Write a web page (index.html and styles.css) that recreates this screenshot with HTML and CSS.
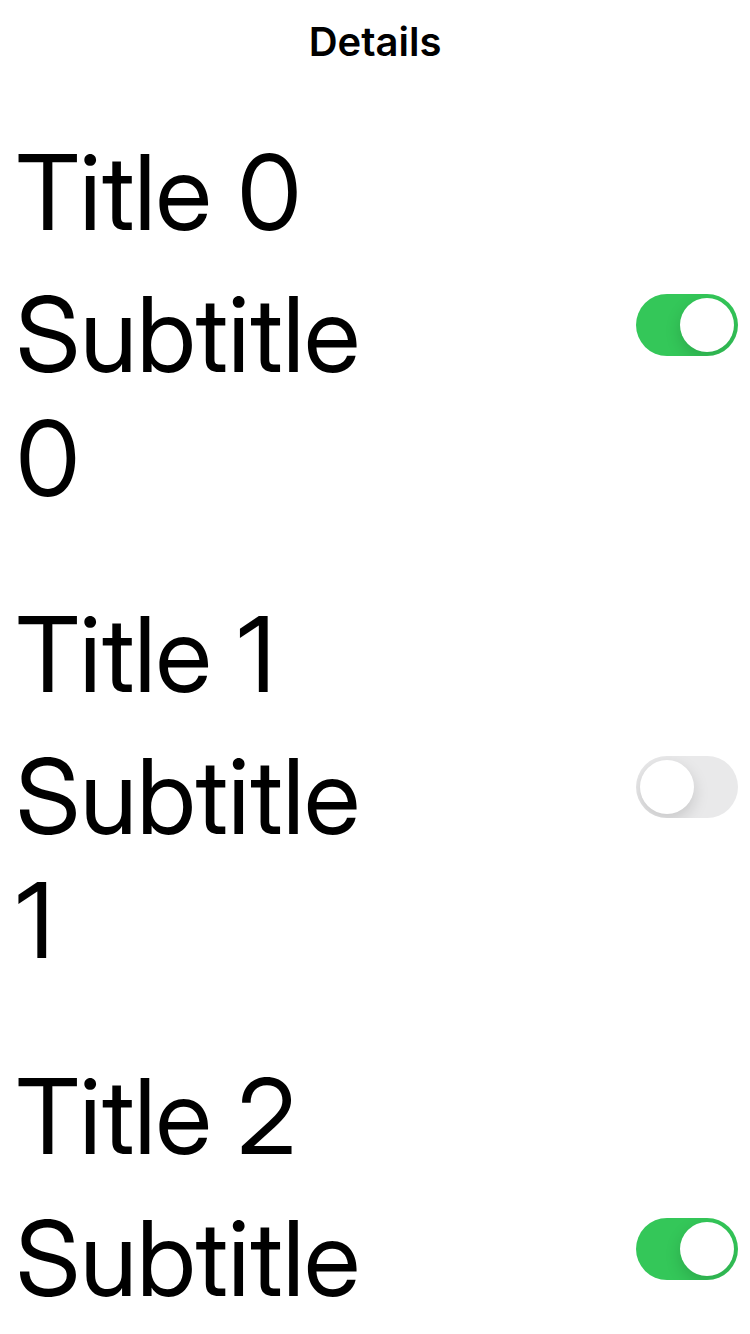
FILE: index.html
```html
<!DOCTYPE html>
<html lang="en">
<head>
<meta charset="utf-8">
<meta name="viewport" content="width=device-width, initial-scale=1">
<title>Details</title>
<link rel="stylesheet" href="styles.css">
</head>
<body>
<header class="navbar"><h1 class="navbar-title">Details</h1></header>
<main class="list">
  <section class="row">
    <label class="text" for="switch-0"><span class="title">Title 0</span><span class="subtitle">Subtitle 0</span></label>
    <input class="switch" id="switch-0" type="checkbox" role="switch" checked>
  </section>
  <section class="row">
    <label class="text" for="switch-1"><span class="title">Title 1</span><span class="subtitle">Subtitle 1</span></label>
    <input class="switch" id="switch-1" type="checkbox" role="switch">
  </section>
  <section class="row">
    <label class="text" for="switch-2"><span class="title">Title 2</span><span class="subtitle">Subtitle 2</span></label>
    <input class="switch" id="switch-2" type="checkbox" role="switch" checked>
  </section>
</main>
</body>
</html>
```
FILE: styles.css
```css
* {
  box-sizing: border-box;
}

body {
  margin: 0;
  height: 100vh;
  display: flex;
  flex-direction: column;
  background: #fff;
  color: #000;
  font-family: Inter, "Liberation Sans", sans-serif;
}

.navbar {
  flex: none;
  padding: 16px;
  text-align: center;
}

.navbar-title {
  margin: 0;
  font-size: 40px;
  line-height: 52px;
  font-weight: 600;
}

.list {
  flex: 1;
  min-height: 0;
  overflow-y: auto;
  scrollbar-width: none;
  padding-top: 10px;
}

.row {
  display: flex;
  align-items: center;
  justify-content: space-between;
  padding: 36px 12px 36px 16px;
}

.text {
  display: flex;
  flex-direction: column;
  gap: 18px;
  width: 50%;
  font-family: "Inter Display", "Liberation Sans", sans-serif;
  font-size: 104px;
  line-height: 124px;
}

.switch {
  appearance: none;
  flex: none;
  width: 102px;
  height: 62px;
  margin: 0;
  padding: 4px;
  border-radius: 31px;
  background: #e9e9ea;
  overflow: hidden;
}

.switch::before {
  content: "";
  display: block;
  width: 54px;
  height: 54px;
  border-radius: 50%;
  background: #fff;
  box-shadow: 0 6px 16px rgba(0, 0, 0, 0.15);
}

.switch:checked {
  background: #34c759;
}

.switch:checked::before {
  margin-left: auto;
}
```
